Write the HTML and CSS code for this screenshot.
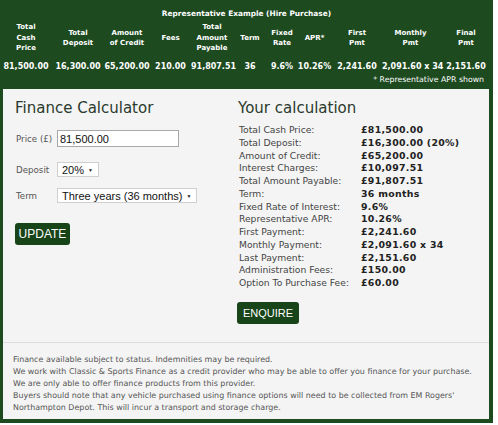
FILE: index.html
```html
<!DOCTYPE html>
<html>
<head>
<meta charset="utf-8">
<link rel="stylesheet" href="styles.css">
</head>
<body>
<div class="frame">
  <div class="example">
    <div class="example-title">Representative Example (Hire Purchase)</div>
    <table class="rep">
      <colgroup>
        <col style="width:52px"><col style="width:52px"><col style="width:46px"><col style="width:41px"><col style="width:42px"><col style="width:34px"><col style="width:30px"><col style="width:35px"><col style="width:50px"><col style="width:57px"><col style="width:54px">
      </colgroup>
      <tr class="heads">
        <th>Total<br>Cash<br>Price</th>
        <th>Total<br>Deposit</th>
        <th>Amount<br>of Credit</th>
        <th>Fees</th>
        <th>Total<br>Amount<br>Payable</th>
        <th>Term</th>
        <th>Fixed<br>Rate</th>
        <th>APR*</th>
        <th>First<br>Pmt</th>
        <th>Monthly<br>Pmt</th>
        <th>Final<br>Pmt</th>
      </tr>
      <tr class="vals">
        <td>81,500.00</td>
        <td>16,300.00</td>
        <td>65,200.00</td>
        <td>210.00</td>
        <td>91,807.51</td>
        <td>36</td>
        <td>9.6%</td>
        <td>10.26%</td>
        <td>2,241.60</td>
        <td>2,091.60 x 34</td>
        <td>2,151.60</td>
      </tr>
    </table>
    <div class="apr-note">* Representative APR shown</div>
  </div>
  <div class="panel">
    <div class="columns">
      <div class="calc">
        <h2 class="title">Finance Calculator</h2>
        <div class="field field-price">
          <span class="label">Price (£)</span>
          <input class="input" type="text" value="81,500.00">
        </div>
        <div class="field field-deposit">
          <span class="label">Deposit</span>
          <span class="select"><span class="select-text">20%</span><span class="arrow">▼</span></span>
        </div>
        <div class="field field-term">
          <span class="label">Term</span>
          <span class="select"><span class="select-text">Three years (36 months)</span><span class="arrow">▼</span></span>
        </div>
        <button class="btn btn-update">UPDATE</button>
      </div>
      <div class="result">
        <h2 class="title">Your calculation</h2>
        <dl class="details">
          <dt>Total Cash Price:</dt><dd>£81,500.00</dd>
          <dt>Total Deposit:</dt><dd>£16,300.00 (20%)</dd>
          <dt>Amount of Credit:</dt><dd>£65,200.00</dd>
          <dt>Interest Charges:</dt><dd>£10,097.51</dd>
          <dt>Total Amount Payable:</dt><dd>£91,807.51</dd>
          <dt>Term:</dt><dd>36 months</dd>
          <dt>Fixed Rate of Interest:</dt><dd>9.6%</dd>
          <dt>Representative APR:</dt><dd>10.26%</dd>
          <dt>First Payment:</dt><dd>£2,241.60</dd>
          <dt>Monthly Payment:</dt><dd>£2,091.60 x 34</dd>
          <dt>Last Payment:</dt><dd>£2,151.60</dd>
          <dt>Administration Fees:</dt><dd>£150.00</dd>
          <dt>Option To Purchase Fee:</dt><dd>£60.00</dd>
        </dl>
        <button class="btn btn-enquire">ENQUIRE</button>
      </div>
    </div>
    <div class="footer">
      <p>Finance available subject to status. Indemnities may be required.</p>
      <p>We work with Classic &amp; Sports Finance as a credit provider who may be able to offer you finance for your purchase.</p>
      <p>We are only able to offer finance products from this provider.</p>
      <p>Buyers should note that any vehicle purchased using finance options will need to be collected from EM Rogers' Northampton Depot. This will incur a transport and storage charge.</p>
    </div>
  </div>
</div>
</body>
</html>
```

FILE: styles.css
```css
* { box-sizing: border-box; }
html, body { margin: 0; padding: 0; background: #ffffff; }
body { font-family: "DejaVu Sans", Verdana, sans-serif; }

.frame {
  width: 493px;
  height: 423px;
  background: #1d4a1f;
  padding: 0 4px 4px 3px;
  display: flex;
  flex-direction: column;
}

.example {
  height: 89px;
  color: #ffffff;
  padding-top: 8px;
  margin-left: -3px;
  margin-right: -4px;
}
.example-title {
  font-weight: bold;
  font-size: 7.4px;
  line-height: 12px;
  text-align: center;
}
.rep {
  width: 493px;
  table-layout: fixed;
  border-collapse: collapse;
  font-weight: bold;
}
.rep th, .rep td { padding: 0; text-align: center; white-space: nowrap; }
.rep th {
  font-size: 7px;
  line-height: 10.5px;
  height: 36px;
  vertical-align: middle;
}
.rep td {
  font-size: 8px;
  line-height: 12px;
  padding-top: 5px;
}
.apr-note {
  font-size: 7.8px;
  line-height: 10px;
  text-align: right;
  padding-right: 9px;
  margin-top: 2px;
}

.panel {
  flex: 1;
  background: #f4f4f4;
  display: flex;
  flex-direction: column;
}
.columns {
  display: flex;
  padding: 10px 0 0 12px;
  height: 254px;
  border-bottom: 1px solid #dcdcdc;
}
.calc { width: 223px; }
.result { flex: 1; }

.title {
  margin: 0;
  font-weight: normal;
  font-size: 15px;
  line-height: 18px;
  color: #2a3a2c;
}

.field {
  display: flex;
  align-items: center;
  height: 17px;
}
.field-price { margin-top: 13px; }
.field-deposit { margin-top: 15px; height: 15px; }
.field-term { margin-top: 11px; height: 15px; }
.label {
  width: 42px;
  font-size: 8.7px;
  color: #555555;
  padding-left: 1px;
}
.input {
  width: 122px;
  height: 17px;
  border: 1px solid #a8a8a8;
  background: #ffffff;
  font-family: "Liberation Sans", Arial, sans-serif;
  font-size: 11px;
  padding: 0 2px;
  color: #111111;
  margin: 0;
  border-radius: 0;
}
.select {
  display: inline-flex;
  align-items: center;
  height: 15px;
  border: 1px solid #cfcfcf;
  background: #ffffff;
  padding: 0 5px 0 4px;
  font-family: "Liberation Sans", Arial, sans-serif;
  font-size: 11px;
  color: #111111;
}
.arrow {
  font-size: 5px;
  margin-left: 4px;
  color: #222222;
}

.btn {
  display: block;
  border: 0;
  border-radius: 3px;
  background: #174418;
  color: #ffffff;
  font-family: "Liberation Sans", Arial, sans-serif;
  font-size: 11.5px;
  height: 22px;
  padding: 0;
  margin: 0;
}
.btn-update { width: 55px; margin-top: 20px; font-size: 12px; }
.btn-enquire { width: 62px; margin-top: 12px; margin-left: -1px; font-size: 11px; }

.details {
  margin: 7px 0 0 1px;
  display: grid;
  grid-template-columns: 122px auto;
  font-size: 9.2px;
  line-height: 12.75px;
}
.details dt { color: #444444; }
.details dd {
  margin: 0;
  font-weight: bold;
  color: #222222;
  font-size: 9.4px;
  letter-spacing: 0.3px;
}

.footer {
  padding: 11px 14px 0 10px;
  font-size: 7.95px;
  line-height: 11.9px;
  color: #555555;
}
.footer p { margin: 0; }
```
